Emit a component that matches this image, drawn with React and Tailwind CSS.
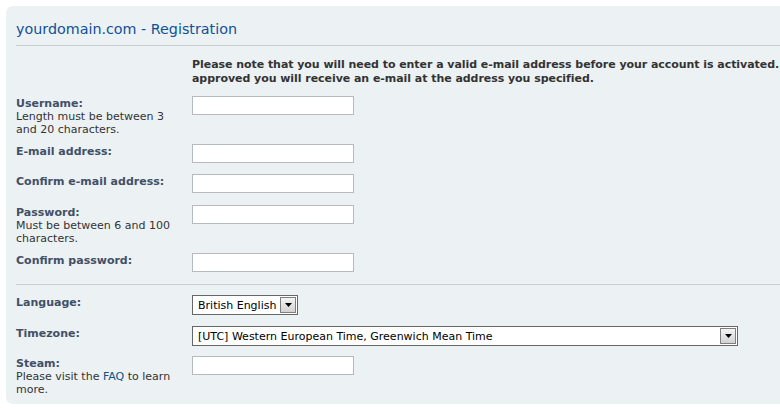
const font = "font-['DejaVu_Sans',Verdana,sans-serif]";

const TextInput = () => (
    <input
        type="text"
        className="block h-[19px] w-[162px] border border-[#b4bac0] bg-white px-[2px] text-[11px] outline-none"
    />
);

const Select = ({ value, width }) => (
    <div className={`flex h-[20px] ${width} items-center border border-[#666666] bg-white pl-[5px] pr-[1px]`}>
        <span className="flex-1 whitespace-nowrap text-[11px] leading-none text-black">{value}</span>
        <span className="flex h-[16px] w-[16px] items-center justify-center border border-[#7f7f7f] bg-gradient-to-b from-[#f4f4f4] to-[#d2d2d2]">
            <svg width="7" height="4" viewBox="0 0 7 4">
                <path d="M0 0h7L3.5 4z" fill="#000" />
            </svg>
        </span>
    </div>
);

const Row = ({ label, hint, children, className = '' }) => (
    <div className={`flex items-start ${className}`}>
        <div className="w-[176px] pt-[1px] leading-[13px]">
            <div className="font-bold text-[#425067]">{label}</div>
            {hint && <div className="pr-[10px] text-[#333333]">{hint}</div>}
        </div>
        {children}
    </div>
);

const App = () => {
    return (
        <div className={`h-[408px] w-[780px] overflow-hidden bg-white pl-[6px] pt-[6px] ${font} text-[11px]`}>
            <div className="w-[1000px] rounded-[7px] bg-[#ecf1f3] pb-[8px] pl-[10px] pt-[14px]">
                <h2 className="border-b border-[#cccccc] pb-[7px] text-[14.3px] leading-[18px] text-[#115098]">
                    yourdomain.com - Registration
                </h2>

                <div className="mt-[12px] pl-[176px] font-bold leading-[14px] tracking-[-0.05px] text-[#333333]">
                    <div className="whitespace-nowrap">
                        Please note that you will need to enter a valid e-mail address before your account is activated. Once your account is
                    </div>
                    <div className="whitespace-nowrap">approved you will receive an e-mail at the address you specified.</div>
                </div>

                <Row className="mt-[10px]" label="Username:" hint="Length must be between 3 and 20 characters.">
                    <TextInput />
                </Row>
                <Row className="mt-[8px]" label="E-mail address:">
                    <TextInput />
                </Row>
                <Row className="mt-[11px]" label="Confirm e-mail address:">
                    <TextInput />
                </Row>
                <Row className="mt-[12px]" label="Password:" hint="Must be between 6 and 100 characters.">
                    <TextInput />
                </Row>
                <Row className="mt-[8px]" label="Confirm password:">
                    <TextInput />
                </Row>

                <div className="mt-[12px] border-t border-[#cccccc]" />

                <Row className="mt-[10px]" label="Language:">
                    <Select value="British English" width="w-[106px]" />
                </Row>
                <Row className="mt-[11px]" label="Timezone:">
                    <Select value="[UTC] Western European Time, Greenwich Mean Time" width="w-[546px]" />
                </Row>
                <Row
                    className="mt-[10px]"
                    label="Steam:"
                    hint={
                        <>
                            Please visit the <a className="text-[#105289]">FAQ</a> to learn more.
                        </>
                    }
                >
                    <TextInput />
                </Row>
            </div>
        </div>
    );
};

export default App;
